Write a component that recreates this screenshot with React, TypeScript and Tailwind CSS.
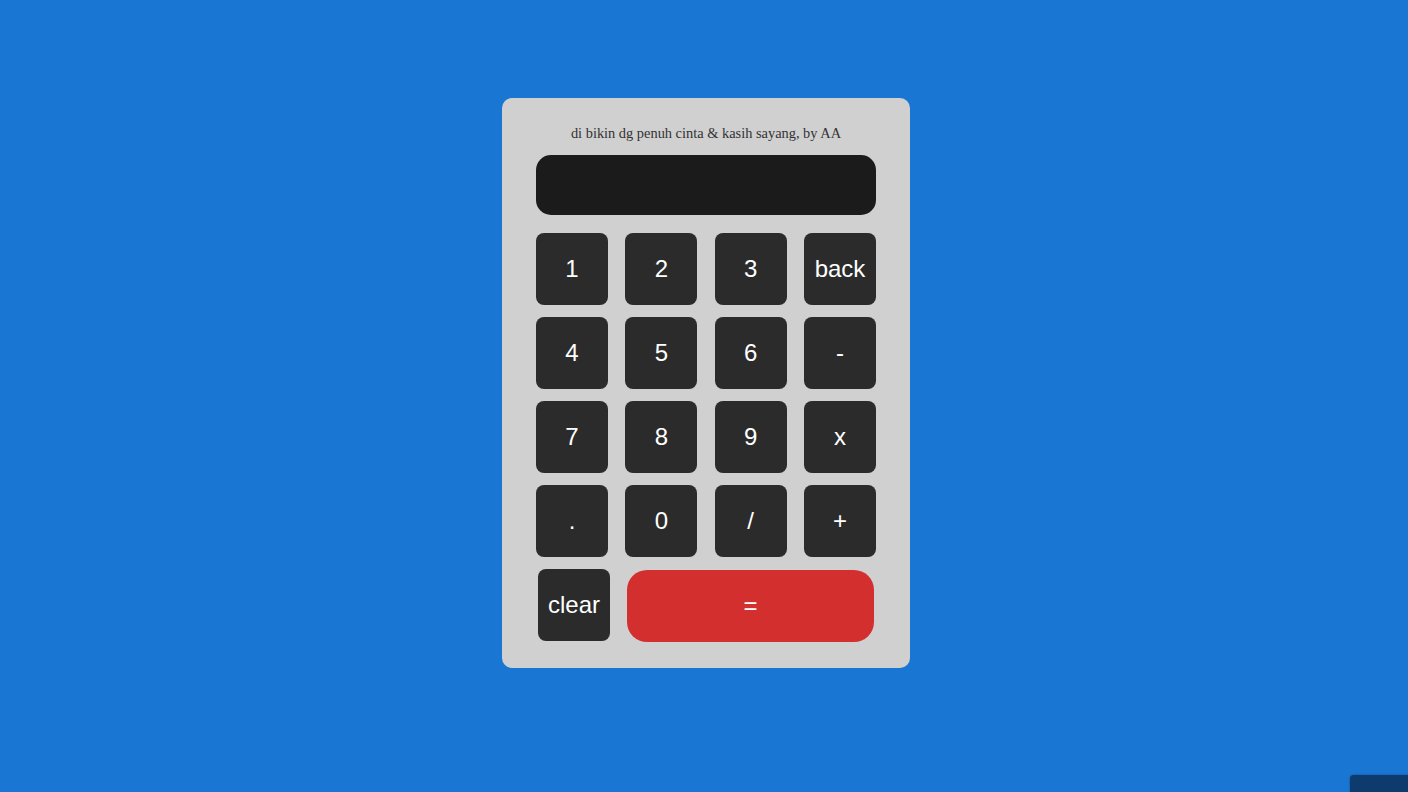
const keys = ["1", "2", "3", "back", "4", "5", "6", "-", "7", "8", "9", "x", ".", "0", "/", "+"];

export default function App() {
  return (
    <div className="relative min-h-screen h-[792px] overflow-hidden bg-[#1976d2] flex justify-center items-start pt-[98px] pl-[4px]">
      <div className="w-[408px] h-[570px] rounded-[10px] bg-[#d0d0d0] pt-[25px] px-[34px] flex flex-col items-center">
        <p className="font-['Liberation_Serif',serif] text-[14.4px] leading-[20px] text-[#333] mb-[12px]">
          di bikin dg penuh cinta &amp; kasih sayang, by AA
        </p>
        <div className="w-[340px] h-[60px] rounded-[15px] bg-[#1b1b1b]" />
        <div className="w-[340px] mt-[18px] grid grid-cols-[repeat(4,72px)] justify-between gap-y-[12px]">
          {keys.map(k => (
            <button
              key={k}
              className="h-[72px] w-[72px] rounded-[8px] bg-[#2b2b2b] text-white text-[24px] font-['Liberation_Sans',Arial,sans-serif]"
            >
              {k}
            </button>
          ))}
        </div>
        <div className="w-[340px] mt-[12px] px-[2px] flex gap-[17px] items-start">
          <button className="h-[72px] w-[72px] rounded-[8px] bg-[#2b2b2b] text-white text-[24px] font-['Liberation_Sans',Arial,sans-serif]">
            clear
          </button>
          <button className="mt-px h-[72px] flex-1 rounded-[20px] bg-[#d32f2f] text-white text-[24px] font-['Liberation_Sans',Arial,sans-serif]">
            =
          </button>
        </div>
      </div>
      <div className="absolute left-[1350px] top-[775px] w-[80px] h-[40px] rounded-[4px] bg-[#0d3b6d] shadow-[0_0_2px_rgba(0,0,0,0.4)]" />
    </div>
  );
}
